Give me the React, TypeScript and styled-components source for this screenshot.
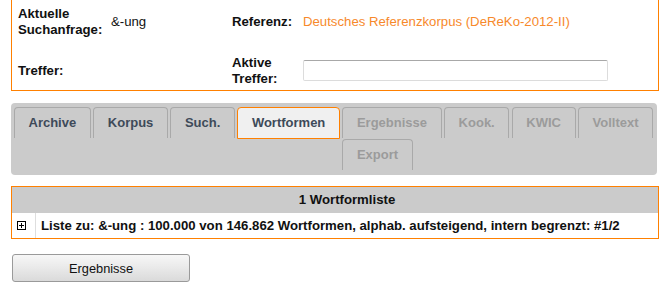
import React from 'react';
import styled, { createGlobalStyle } from 'styled-components';

const GlobalStyle = createGlobalStyle`
body{
  margin: 0;
  background: #FFFFFF;
  font-family: "Liberation Sans", Arial, sans-serif;
  font-size: 13.2px;
  color: #111;
}
`;

const Page = styled.div`
padding: 0 10px 0 11px;
width: 648px;
`;

const InfoBox = styled.section`
margin-top: -1px;
border: 1px solid #ff8000;
padding: 6px 6px 3px;
display: grid;
grid-template-columns: 93px 121px 71px 1fr;
row-gap: 17px;
align-items: center;
`;

const Label = styled.div`
font-weight: bold;
line-height: 16px;
min-height: 32px;
display: flex;
align-items: center;
`;

const Value = styled.div<{ $accent?: boolean }>`
line-height: 16px;
color: ${p => (p.$accent ? '#f7892b' : '#111')};
white-space: nowrap;
`;

const Field = styled.input`
display: block;
width: 305px;
height: 21px;
box-sizing: border-box;
border: 1px solid #dcdcdc;
border-top-color: #a8a8a8;
border-radius: 2px;
margin-top: -2px;
`;

const TabPanel = styled.nav`
margin-top: 12px;
margin-right: 2px;
background: #cbcbcb;
border-radius: 4px;
padding: 3px 0 5px 3px;
> ul{
  display: flow-root;
  margin: 0;
  padding: 0;
  list-style: none;
}
`;

type TabState = 'default' | 'active' | 'disabled';

const Tab = styled.li<{ $state: TabState }>`
float: left;
margin: 1px 2.6px 0 0;
padding: 7px 13.5px;
font-size: 13px;
line-height: 16px;
font-weight: bold;
white-space: nowrap;
border: 1px solid ${p => (p.$state === 'active' ? '#ff8000' : '#a9a9a9')};
border-bottom-width: ${p => (p.$state === 'active' ? '1px' : '0')};
border-radius: 4px 4px 0 0;
background: ${p => (p.$state === 'active' ? '#f0f0f0' : '#cbcbcb')};
color: ${p => (p.$state === 'disabled' ? '#9b9b9b' : '#3e4a59')};
`;

const ResultTable = styled.section`
margin-top: 11px;
border: 1px solid #ff8000;
display: grid;
grid-template-columns: 24px 1fr;
`;

const HeadCell = styled.div`
background: #cbcbcb;
height: 26px;
line-height: 26px;
font-weight: bold;
text-align: center;
`;

const IconCell = styled.div`
height: 25px;
border-right: 1px solid #dedede;
display: flex;
align-items: center;
padding-left: 5px;
`;

const TextCell = styled.div`
height: 25px;
line-height: 25px;
padding-left: 5px;
font-weight: bold;
white-space: nowrap;
`;

const Button = styled.button`
display: block;
margin: 15px 0 0 1px;
width: 178px;
height: 28px;
border: 1px solid #9a9a9a;
border-radius: 3px;
background: linear-gradient(#f7f7f7, #e9e9e9 50%, #dadada);
font-family: "Liberation Sans", Arial, sans-serif;
font-size: 12.8px;
color: #111;
`;

const tabs: { label: string; state: TabState }[] = [
  { label: 'Archive', state: 'default' },
  { label: 'Korpus', state: 'default' },
  { label: 'Such.', state: 'default' },
  { label: 'Wortformen', state: 'active' },
  { label: 'Ergebnisse', state: 'disabled' },
  { label: 'Kook.', state: 'disabled' },
  { label: 'KWIC', state: 'disabled' },
  { label: 'Volltext', state: 'disabled' },
  { label: 'Export', state: 'disabled' },
];

function PlusBox() {
  return (
    <svg width="9" height="9" viewBox="0 0 9 9">
      <rect x="0.5" y="0.5" width="8" height="8" fill="none" stroke="#000"/>
      <path d="M2 4.5H7M4.5 2V7" stroke="#000"/>
    </svg>
  );
}

export default function App() {
  return (
    <Page>
      <GlobalStyle/>
      <InfoBox>
        <Label>Aktuelle<br/>Suchanfrage:</Label>
        <Value>&amp;-ung</Value>
        <Label>Referenz:</Label>
        <Value $accent>Deutsches Referenzkorpus (DeReKo-2012-II)</Value>
        <Label>Treffer:</Label>
        <Value/>
        <Label>Aktive<br/>Treffer:</Label>
        <div><Field type="text"/></div>
      </InfoBox>
      <TabPanel>
        <ul>
          {tabs.map(t => (
            <Tab key={t.label} $state={t.state}>{t.label}</Tab>
          ))}
        </ul>
      </TabPanel>
      <ResultTable>
        <HeadCell/>
        <HeadCell>1 Wortformliste</HeadCell>
        <IconCell><PlusBox/></IconCell>
        <TextCell>Liste zu: &amp;-ung : 100.000 von 146.862 Wortformen, alphab. aufsteigend, intern begrenzt: #1/2</TextCell>
      </ResultTable>
      <Button>Ergebnisse</Button>
    </Page>
  );
}
